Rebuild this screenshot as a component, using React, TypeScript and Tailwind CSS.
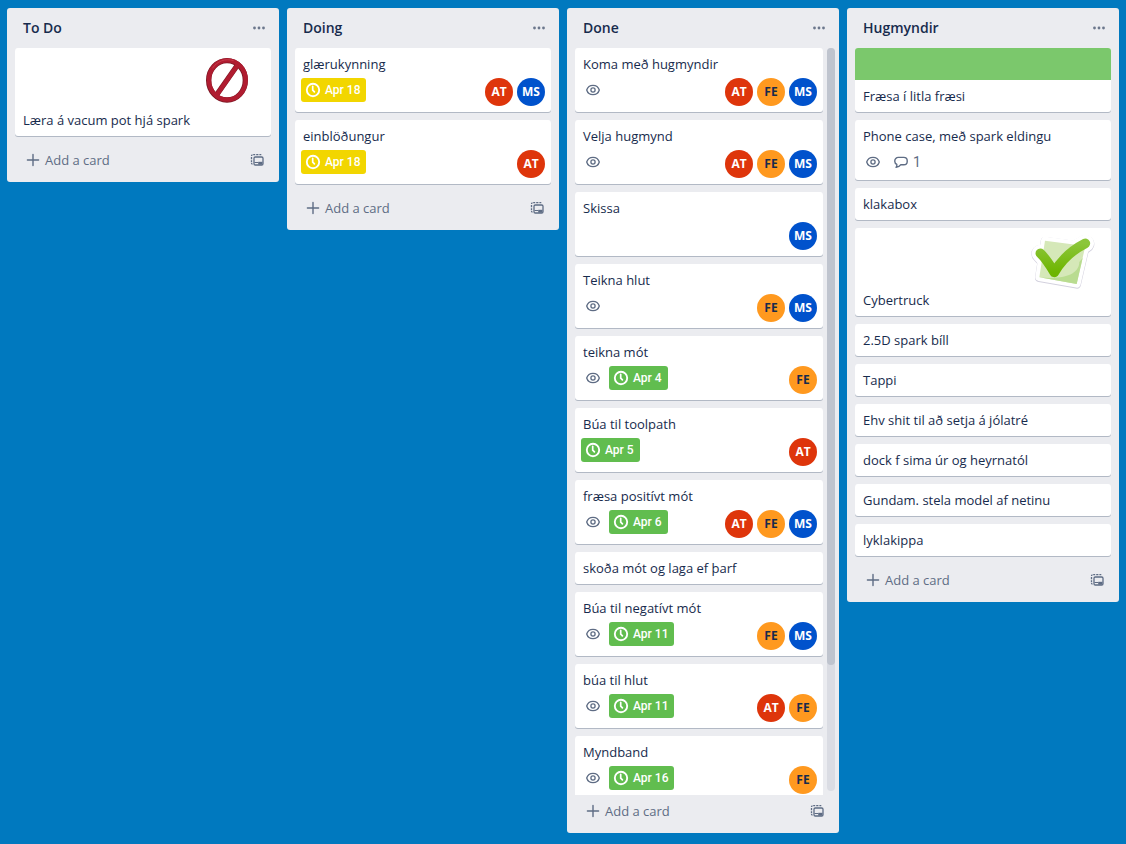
import { ReactNode } from "react";
import clsx from "clsx";

type Member = "AT" | "FE" | "MS";

interface Card {
  title: string;
  watching?: boolean;
  comments?: number;
  due?: string;
  dueSoon?: boolean;
  members?: Member[];
  cover?: "green" | "prohibited" | "check";
}

interface List {
  name: string;
  cards: Card[];
  scrolls?: boolean;
}

const lists: List[] = [
  {
    name: "To Do",
    cards: [{ title: "Læra á vacum pot hjá spark", cover: "prohibited" }],
  },
  {
    name: "Doing",
    cards: [
      { title: "glærukynning", due: "Apr 18", dueSoon: true, members: ["AT", "MS"] },
      { title: "einblöðungur", due: "Apr 18", dueSoon: true, members: ["AT"] },
    ],
  },
  {
    name: "Done",
    scrolls: true,
    cards: [
      { title: "Koma með hugmyndir", watching: true, members: ["AT", "FE", "MS"] },
      { title: "Velja hugmynd", watching: true, members: ["AT", "FE", "MS"] },
      { title: "Skissa", members: ["MS"] },
      { title: "Teikna hlut", watching: true, members: ["FE", "MS"] },
      { title: "teikna mót", watching: true, due: "Apr 4", members: ["FE"] },
      { title: "Búa til toolpath", due: "Apr 5", members: ["AT"] },
      { title: "fræsa positívt mót", watching: true, due: "Apr 6", members: ["AT", "FE", "MS"] },
      { title: "skoða mót og laga ef þarf" },
      { title: "Búa til negatívt mót", watching: true, due: "Apr 11", members: ["FE", "MS"] },
      { title: "búa til hlut", watching: true, due: "Apr 11", members: ["AT", "FE"] },
      { title: "Myndband", watching: true, due: "Apr 16", members: ["FE"] },
    ],
  },
  {
    name: "Hugmyndir",
    cards: [
      { title: "Fræsa í litla fræsi", cover: "green" },
      { title: "Phone case, með spark eldingu", watching: true, comments: 1 },
      { title: "klakabox" },
      { title: "Cybertruck", cover: "check" },
      { title: "2.5D spark bíll" },
      { title: "Tappi" },
      { title: "Ehv shit til að setja á jólatré" },
      { title: "dock f sima úr og heyrnatól" },
      { title: "Gundam. stela model af netinu" },
      { title: "lyklakippa" },
    ],
  },
];

const memberColors: Record<Member, string> = {
  AT: "bg-[#de350b] text-white",
  FE: "bg-[#ff991f] text-[#172b4d]",
  MS: "bg-[#0052cc] text-white",
};

function EyeIcon() {
  return (
    <svg viewBox="0 0 20 20" className="size-5" fill="none" stroke="currentColor" strokeWidth="1.3" aria-label="Watching">
      <path d="M3.700 10C4.600 7 7 5.300 10 5.300S15.400 7 16.300 10C15.400 13 13 14.700 10 14.700S4.600 13 3.700 10Z" />
      <circle cx="10" cy="10" r="2.100" />
    </svg>
  );
}

function ClockIcon() {
  return (
    <svg viewBox="0 0 20 20" className="size-5" fill="none" stroke="currentColor" strokeWidth="1.900" strokeLinecap="round" aria-hidden="true">
      <circle cx="10" cy="10" r="6.200" />
      <path d="M9.700 6.300V10.100L11.400 11.900" strokeWidth="1.700" />
    </svg>
  );
}

function CommentIcon() {
  return (
    <svg viewBox="0 0 20 20" className="size-5" fill="none" stroke="currentColor" strokeWidth="1.400" strokeLinejoin="round" aria-label="Comments">
      <path d="M7.200 5.400H12.800A3.400 3.400 0 0 1 16.200 8.800V9.400A3.400 3.400 0 0 1 12.800 12.800H9.600C8.600 14.200 7 15.200 5.100 15.400C5.800 14.400 6 13.400 5.800 12.300C4.600 11.700 3.800 10.700 3.800 9.400V8.800A3.400 3.400 0 0 1 7.200 5.400Z" />
    </svg>
  );
}

function PlusIcon() {
  return (
    <svg viewBox="0 0 16 16" className="size-4" stroke="currentColor" strokeWidth="1.400" strokeLinecap="round" aria-hidden="true">
      <path d="M8 2.400V13.600M2.400 8H13.600" />
    </svg>
  );
}

function DotsIcon() {
  return (
    <svg viewBox="0 0 16 16" className="size-4" fill="currentColor" aria-hidden="true">
      <circle cx="3.500" cy="8" r="1.400" />
      <circle cx="8" cy="8" r="1.400" />
      <circle cx="12.500" cy="8" r="1.400" />
    </svg>
  );
}

function TemplateIcon() {
  return (
    <svg viewBox="0 0 16 16" className="size-4" fill="none" stroke="currentColor" strokeWidth="1.300" aria-hidden="true">
      <path d="M4.200 2.700H6.200M7.200 2.700H9.400M10.400 2.700H12.300" />
      <path d="M3.500 2.800C2.800 2.800 2.500 3.200 2.500 4M2.500 5V7.200M2.500 8.200V10.200M2.500 11C2.500 11.800 2.800 12.100 3.500 12.100" />
      <rect x="5" y="5" width="9" height="8" rx="1.300" />
      <path d="M5.500 10.500H9.200" strokeWidth="1" />
      <path d="M9.200 9.800H13.500V12.600H9.200Z" fill="currentColor" stroke="none" />
    </svg>
  );
}

function ProhibitedSticker() {
  return (
    <svg viewBox="0 0 192 180" className="absolute right-3 top-0.5 h-[60px] w-16" fill="none" aria-hidden="true">
      <g stroke="#7d1825" strokeWidth="16">
        <ellipse cx="96" cy="91" rx="55" ry="59" />
        <path d="M127 46L64 136" />
      </g>
      <g stroke="#b01c30" strokeWidth="13">
        <ellipse cx="97" cy="90" rx="55" ry="59" />
        <path d="M128 45L65 135" />
      </g>
      <path d="M52 55C66 34 90 24 116 32" stroke="#c93a4b" strokeWidth="3" />
    </svg>
  );
}

function CheckSticker() {
  return (
    <svg viewBox="0 0 240 192" className="absolute right-[7px] top-0.5 h-16 w-20 overflow-visible" fill="none" strokeLinecap="round" strokeLinejoin="round" aria-hidden="true">
      <defs>
        <linearGradient id="tick" x1="0" y1="0" x2="0" y2="1">
          <stop offset="0" stopColor="#8cc63a" />
          <stop offset="1" stopColor="#6db500" />
        </linearGradient>
      </defs>
      <g stroke="#d3d1de">
        <path d="M63 34L184 50L158 163L46 143Z" strokeWidth="26" />
        <path d="M49 72C64 86 78 108 91 129C112 92 145 62 184 42" strokeWidth="54" />
      </g>
      <g stroke="#fff" fill="#fff">
        <path d="M63 32L184 48L158 161L46 141Z" strokeWidth="24" />
        <path d="M49 70C64 84 78 106 91 127C112 90 145 60 184 40" strokeWidth="52" fill="none" />
      </g>
      <path d="M63 32L184 48L158 162L46 142Z" fill="#d5e8b8" />
      <path d="M166 96C166 128 130 150 46 142L158 162L176 84Z" fill="#b9dc90" />
      <path d="M49 70C64 84 78 106 91 127C112 90 145 60 184 40" stroke="url(#tick)" strokeWidth="29" />
    </svg>
  );
}

function Badge({ children, tone }: { children: ReactNode; tone?: "green" | "yellow" }) {
  return (
    <span
      className={clsx(
        "flex h-6 items-center rounded-[3px] p-0.5 font-['Roboto',sans-serif] leading-5",
        tone === "green" && "bg-[#61bd4f] text-xs font-medium text-white",
        tone === "yellow" && "bg-[#f2d600] text-xs font-medium text-white",
        !tone && "text-sm text-[#5e6c84]",
      )}
    >
      {children}
    </span>
  );
}

function BoardCard({ card }: { card: Card }) {
  const hasDetails = card.watching || card.comments || card.due || card.members;
  return (
    <li>
      <a href="#" className="block overflow-hidden rounded-[3px] bg-white shadow-[0_1px_0_rgba(9,30,66,0.25)]">
        {card.cover === "green" && <div className="h-8 bg-[#7bc86c]" />}
        {card.cover === "prohibited" && (
          <div className="relative h-14">
            <ProhibitedSticker />
          </div>
        )}
        {card.cover === "check" && (
          <div className="relative h-14">
            <CheckSticker />
          </div>
        )}
        <div className="px-1.5 pt-1.5 pb-0.5">
          <h3 className="mb-1 px-0.5 text-[13px] leading-5">{card.title}</h3>
          {hasDetails && (
            <div className="mb-1 flex items-start justify-between">
              <div className="flex gap-1">
                {card.watching && (
                  <Badge>
                    <EyeIcon />
                  </Badge>
                )}
                {card.due && (
                  <Badge tone={card.dueSoon ? "yellow" : "green"}>
                    <ClockIcon />
                    <time className="pr-1 pl-0.5">{card.due}</time>
                  </Badge>
                )}
                {card.comments && (
                  <Badge>
                    <CommentIcon />
                    <span className="pr-1 pl-0.5">{card.comments}</span>
                  </Badge>
                )}
              </div>
              {card.members && (
                <div className="flex gap-1">
                  {card.members.map((member) => (
                    <span
                      key={member}
                      className={clsx("flex size-7 items-center justify-center rounded-full text-xs font-bold", memberColors[member])}
                    >
                      {member}
                    </span>
                  ))}
                </div>
              )}
            </div>
          )}
        </div>
      </a>
    </li>
  );
}

function BoardList({ list }: { list: List }) {
  return (
    <section className="flex max-h-full w-[272px] shrink-0 flex-col rounded-[3px] bg-[#ebecf0]">
      <header className="flex h-10 shrink-0 items-center justify-between pr-3 pl-4">
        <h2 className="text-sm leading-5 font-semibold">{list.name}</h2>
        <button type="button" aria-label="List actions" className="text-[#6b778c]">
          <DotsIcon />
        </button>
      </header>
      <div className={clsx("flex min-h-0 gap-1 pl-2", list.scrolls ? "pr-1" : "pr-2")}>
        <ul className="flex min-w-0 flex-1 flex-col gap-2 overflow-y-auto pb-2 [scrollbar-width:none]">
          {list.cards.map((card) => (
            <BoardCard key={card.title} card={card} />
          ))}
        </ul>
        {list.scrolls && (
          <div className="mb-1 w-2 shrink-0 rounded bg-[#dadce3]">
            <div className="h-[83%] rounded bg-[#bfc4ce]" />
          </div>
        )}
      </div>
      <footer className="flex shrink-0 items-center justify-between px-3.5 pt-0.5 pb-2 text-[#5e6c84]">
        <button type="button" className="flex h-7 items-center gap-1 pl-1 text-[13px] leading-5">
          <PlusIcon />
          Add a card
        </button>
        <button type="button" aria-label="Create from template">
          <TemplateIcon />
        </button>
      </footer>
    </section>
  );
}

export default function App() {
  return (
    <main className="flex h-screen items-start gap-2 overflow-x-auto bg-[#0079bf] pt-2 pr-[7px] pb-[11px] pl-[7px] font-['Open_Sans','Noto_Sans',sans-serif] text-[#172b4d]">
      {lists.map((list) => (
        <BoardList key={list.name} list={list} />
      ))}
    </main>
  );
}
